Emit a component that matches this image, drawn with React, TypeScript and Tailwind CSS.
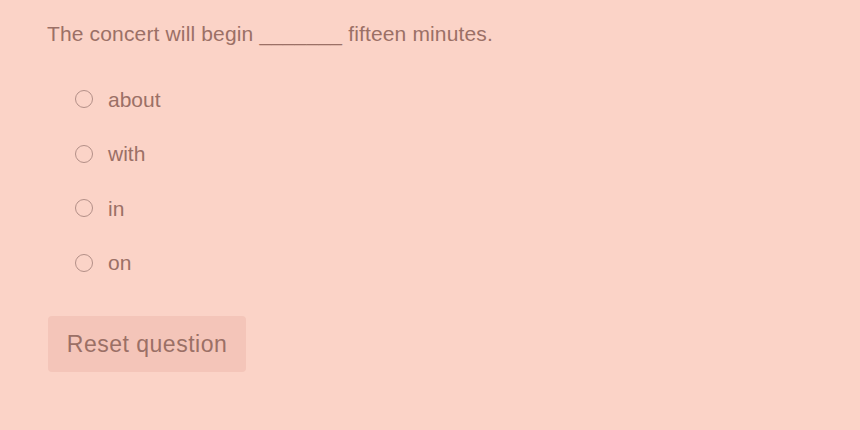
import { useState } from "react";

const options = ["about", "with", "in", "on"];

export default function App() {
  const [picked, setPicked] = useState<string | null>(null);

  return (
    <div
      className="w-[860px] h-[430px] bg-[#fbd3c7] text-[#9b7066] pl-[47px] pt-[21px]"
      style={{ fontFamily: '"Liberation Sans", Arial, sans-serif' }}
    >
      <p className="text-[21px] leading-[26px] tracking-[0.15px]">
        The concert will begin _______ fifteen minutes.
      </p>

      {/* OPTIONS */}
      <div className="flex flex-col mt-[25px] pl-[28px]">
        {options.map((o) => (
          <label
            key={o}
            className="flex items-center h-[54.5px] cursor-pointer"
            onClick={() => setPicked(o)}
          >
            <span className="w-[18px] h-[18px] rounded-full border border-[#b38f87] flex items-center justify-center">
              {picked === o && (
                <span className="w-[8px] h-[8px] rounded-full bg-[#9b7066]" />
              )}
            </span>
            <span className="ml-[15px] text-[21px]">{o}</span>
          </label>
        ))}
      </div>

      {/* BUTTON */}
      <button
        onClick={() => setPicked(null)}
        className="mt-[26px] ml-[1px] w-[198px] h-[56px] rounded bg-[#f4c5b9] text-[23px] tracking-[0.5px] text-[#9b7066]"
      >
        Reset question
      </button>
    </div>
  );
}
